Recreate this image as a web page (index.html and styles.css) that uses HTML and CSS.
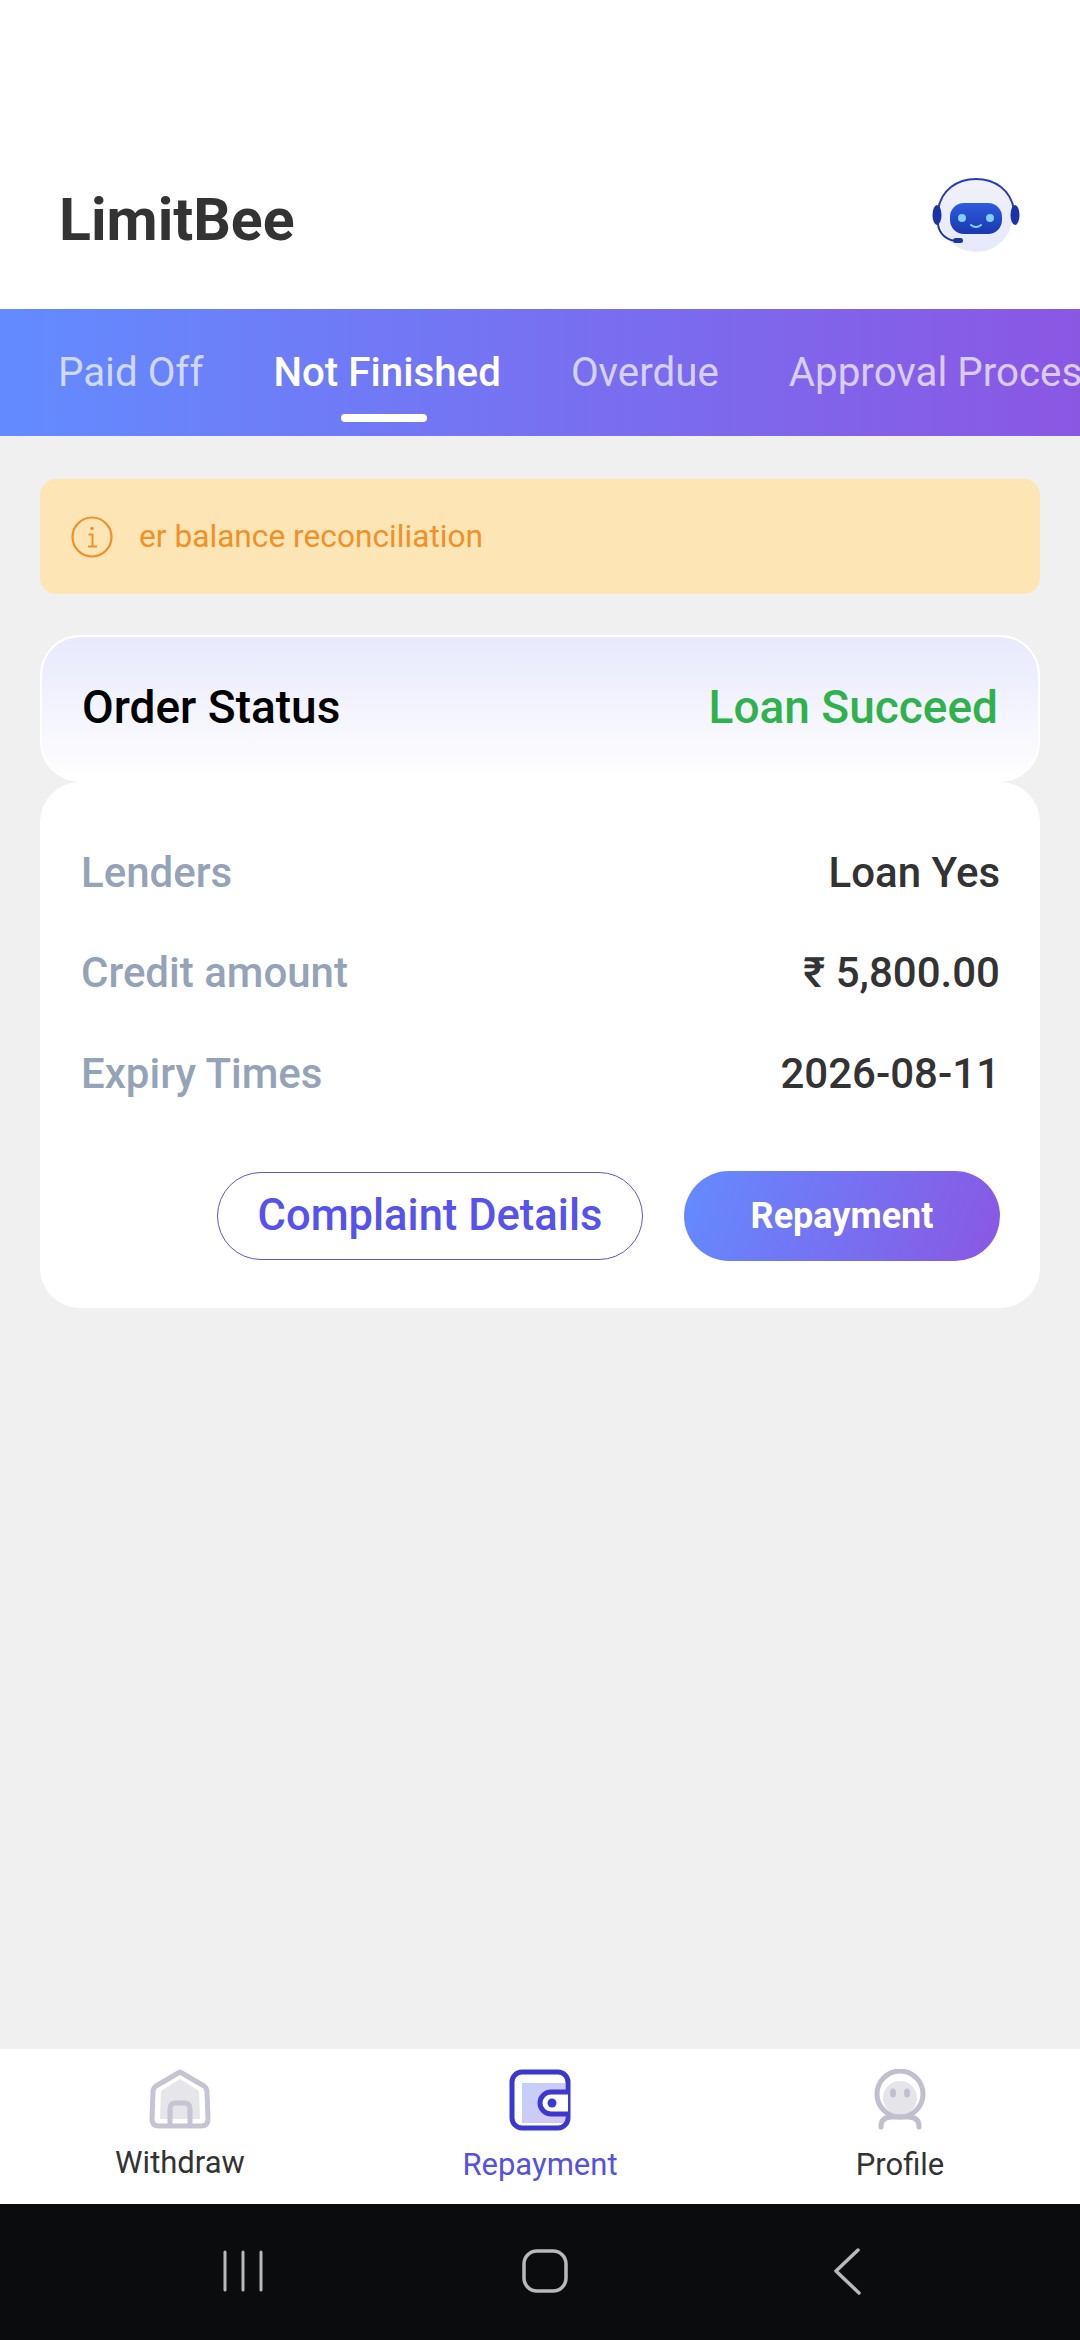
FILE: index.html
```html
<!DOCTYPE html>
<html lang="en">
<head>
  <meta charset="UTF-8" />
  <meta name="viewport" content="width=device-width, initial-scale=1.0" />
  <title>LimitBee</title>
  <link rel="stylesheet" href="styles.css">
</head>
<body>
  <header class="top">
    <h1 class="brand">LimitBee</h1>
    <svg class="bot" width="96" height="84" viewBox="0 0 96 84">
      <defs>
        <linearGradient id="botHead" x1="0" y1="0" x2="0" y2="1">
          <stop offset="0" stop-color="#f1f1f6"/>
          <stop offset="1" stop-color="#e6e9fb"/>
        </linearGradient>
        <linearGradient id="botFace" x1="0" y1="0" x2="0" y2="1">
          <stop offset="0" stop-color="#2e5be0"/>
          <stop offset="1" stop-color="#1b38ae"/>
        </linearGradient>
      </defs>
      <circle cx="48" cy="41" r="37" fill="url(#botHead)"/>
      <path d="M10 36C13 16 29 5 48 5s35 11 38 31" fill="none" stroke="#2a3fb4" stroke-width="2"/>
      <ellipse cx="9" cy="41" rx="4.500" ry="10" fill="#1a34a8"/>
      <ellipse cx="87" cy="41" rx="4.500" ry="10" fill="#1a34a8"/>
      <path d="M10 50c1 10 9 17 20 17" fill="none" stroke="#1a34a8" stroke-width="2"/>
      <rect x="25" y="64" width="10" height="5" rx="2.500" fill="#1a34a8"/>
      <rect x="22" y="29" width="52" height="31" rx="14" fill="url(#botFace)"/>
      <circle cx="34" cy="44" r="4" fill="#7fd0fb"/>
      <circle cx="62" cy="44" r="4" fill="#7fd0fb"/>
      <path d="M43 51c3 2.500 7 2.500 10 0" fill="none" stroke="#7fd0fb" stroke-width="2" stroke-linecap="round"/>
    </svg>
  </header>

  <nav class="tabs">
    <a class="tab">Paid Off</a>
    <a class="tab active">Not Finished</a>
    <a class="tab">Overdue</a>
    <a class="tab">Approval Process</a>
  </nav>

  <main class="content">
    <div class="notice">
      <svg class="notice-icon" width="42" height="42" viewBox="0 0 42 42" fill="none" stroke="#ef9127">
        <circle cx="21" cy="21" r="19.500" stroke-width="2.200"/>
        <circle cx="21" cy="12.500" r="1.800" fill="#ef9127" stroke="none"/>
        <path d="M17.500 18.500H21.500V30M17 30.500H26" stroke-width="2"/>
      </svg>
      <span class="notice-text">er balance reconciliation</span>
    </div>

    <div class="order-head">
      <span class="order-title">Order Status</span>
      <span class="order-state">Loan Succeed</span>
    </div>

    <div class="order-body">
      <div class="row"><span class="label">Lenders</span><span class="value">Loan Yes</span></div>
      <div class="row"><span class="label">Credit amount</span><span class="value">₹ 5,800.00</span></div>
      <div class="row"><span class="label">Expiry Times</span><span class="value">2026-08-11</span></div>
      <div class="actions">
        <button class="btn-outline">Complaint Details</button>
        <button class="btn-fill">Repayment</button>
      </div>
    </div>
  </main>

  <footer class="bottom">
    <div class="item">
      <svg width="62" height="60" viewBox="0 0 62 60" fill="none">
        <path d="M12 22L31 10 50 22 51 50H11z" fill="#e5e5ea"/>
        <path d="M31 3L55 17Q58 19 58 23L59 50Q59 57 52 57H10Q3 57 3 50L4 23Q4 19 7 17z" stroke="#c5c4d2" stroke-width="5" stroke-linejoin="round"/>
        <path d="M21 57V40Q21 34 27 34H35Q41 34 41 40V57" stroke="#c5c4d2" stroke-width="5"/>
      </svg>
      <span class="item-label">Withdraw</span>
    </div>
    <div class="item on">
      <svg width="62" height="62" viewBox="0 0 62 62" fill="none">
        <defs>
          <linearGradient id="walletFill" x1="0" y1="0" x2="1" y2="1">
            <stop offset="0" stop-color="#c3d0fb"/>
            <stop offset="1" stop-color="#d5c5f4"/>
          </linearGradient>
        </defs>
        <path d="M13 14H56V54H13z" fill="url(#walletFill)"/>
        <rect x="3" y="3" width="56" height="56" rx="10" stroke="#3a38cf" stroke-width="5"/>
        <path d="M59 23H42a11 11 0 0 0 0 22H59" fill="#fff" stroke="#3a38cf" stroke-width="5"/>
        <circle cx="43" cy="34" r="4.500" fill="#3a38cf"/>
      </svg>
      <span class="item-label">Repayment</span>
    </div>
    <div class="item">
      <svg width="52" height="62" viewBox="0 0 52 62" fill="none">
        <circle cx="26" cy="29" r="17" fill="#e4e4e9"/>
        <circle cx="26" cy="25" r="23" stroke="#c0bfcd" stroke-width="5"/>
        <ellipse cx="19" cy="24" rx="3" ry="4.500" fill="#c0bfcd"/>
        <ellipse cx="33" cy="24" rx="3" ry="4.500" fill="#c0bfcd"/>
        <path d="M7 58V57Q7 48 18 48H34Q45 48 45 57V58" stroke="#c0bfcd" stroke-width="5" stroke-linecap="round"/>
      </svg>
      <span class="item-label">Profile</span>
    </div>
  </footer>

  <div class="sysbar">
    <svg width="44" height="44" viewBox="0 0 44 44" stroke="#b9b9b9" stroke-width="3" stroke-linecap="round">
      <path d="M4 3V41M22 3V41M40 3V41"/>
    </svg>
    <svg width="46" height="46" viewBox="0 0 46 46" fill="none" stroke="#b9b9b9" stroke-width="3.500">
      <rect x="2" y="3" width="42" height="40" rx="13"/>
    </svg>
    <svg width="30" height="48" viewBox="0 0 30 48" fill="none" stroke="#b9b9b9" stroke-width="3.500" stroke-linecap="round" stroke-linejoin="round">
      <path d="M26 3L4 24 27 46"/>
    </svg>
  </div>
</body>
</html>
```

FILE: styles.css
```css
* {
  box-sizing: border-box;
}

body {
  margin: 0;
  width: 1080px;
  height: 2340px;
  display: flex;
  flex-direction: column;
  font-family: Roboto, "Liberation Sans", sans-serif;
  background-color: #f0f0f0;
  overflow: hidden;
}

/* top */
.top {
  height: 309px;
  padding: 169px 56px 0 59px;
  background-color: #fff;
  display: flex;
  justify-content: space-between;
  align-items: flex-start;
  flex-shrink: 0;
}

.brand {
  margin: 19px 0 0;
  font-size: 59px;
  line-height: 64px;
  font-weight: 700;
  color: #333;
}

.bot {
  margin-top: 5px;
}

/* tabs */
.tabs {
  height: 127px;
  padding: 0 0 0 58px;
  display: flex;
  gap: 70px;
  align-items: center;
  background: linear-gradient(90deg, #638bff, #8a57e3);
  overflow: hidden;
  white-space: nowrap;
  flex-shrink: 0;
}

.tab {
  position: relative;
  font-size: 40.3px;
  line-height: 44px;
  color: rgba(255, 255, 255, 0.7);
  flex-shrink: 0;
}

.tab.active {
  color: #fff;
  font-weight: 500;
}

.tab.active::after {
  content: "";
  position: absolute;
  left: 68px;
  top: 63px;
  width: 86px;
  height: 8px;
  border-radius: 4px;
  background-color: #fff;
}

/* content */
.content {
  flex: 1;
  padding: 43px 40px 0 40px;
}

.notice {
  height: 115px;
  padding: 0 31px;
  display: flex;
  align-items: center;
  gap: 26px;
  background-color: #fee5b6;
  border-radius: 16px;
}

.notice-text {
  font-size: 31.7px;
  color: #ef9127;
}

.order-head {
  height: 147px;
  margin-top: 41px;
  padding: 0 40px 6px;
  display: flex;
  justify-content: space-between;
  align-items: center;
  border: 2px solid #fff;
  border-bottom: none;
  border-radius: 40px;
  background: linear-gradient(180deg, #e8e9fc, #fff);
}

.order-title {
  font-size: 46px;
  font-weight: 500;
  color: #000;
}

.order-state {
  font-size: 46px;
  font-weight: 500;
  color: #2fb14b;
}

.order-body {
  height: 526px;
  padding: 40px 40px 0 41px;
  background-color: #fff;
  border-radius: 40px;
}

.row {
  height: 100.5px;
  display: flex;
  justify-content: space-between;
  align-items: center;
  font-size: 42px;
  font-weight: 500;
}

.label {
  color: #94a3b8;
}

.value {
  color: #333;
}

.actions {
  margin-top: 47px;
  display: flex;
  justify-content: flex-end;
  gap: 41px;
  align-items: center;
}

.btn-outline {
  width: 426px;
  height: 88px;
  padding: 0;
  font: 500 43.5px Roboto, sans-serif;
  color: #5552ee;
  background-color: #fff;
  border: 1px solid #5d55c8;
  border-radius: 44px;
}

.btn-fill {
  width: 316px;
  height: 90px;
  padding: 0;
  font: 700 36px Roboto, sans-serif;
  color: #fff;
  background: linear-gradient(110deg, #638bff, #8a57e3);
  border: none;
  border-radius: 45px;
}

/* bottom nav */
.bottom {
  height: 155px;
  padding-top: 20px;
  display: grid;
  grid-template-columns: repeat(3, 1fr);
  background-color: #fff;
  flex-shrink: 0;
}

.item {
  display: flex;
  flex-direction: column;
  align-items: center;
}

.item-label {
  margin-top: 16px;
  font-size: 31px;
  line-height: 36px;
  color: #333;
}

.item.on .item-label {
  color: #5552e0;
}

/* system bar */
.sysbar {
  height: 136px;
  padding: 26px 0 28px 10px;
  display: grid;
  grid-template-columns: repeat(3, 302px);
  justify-content: center;
  justify-items: center;
  align-items: center;
  background-color: #0b0c0e;
  flex-shrink: 0;
}
```
